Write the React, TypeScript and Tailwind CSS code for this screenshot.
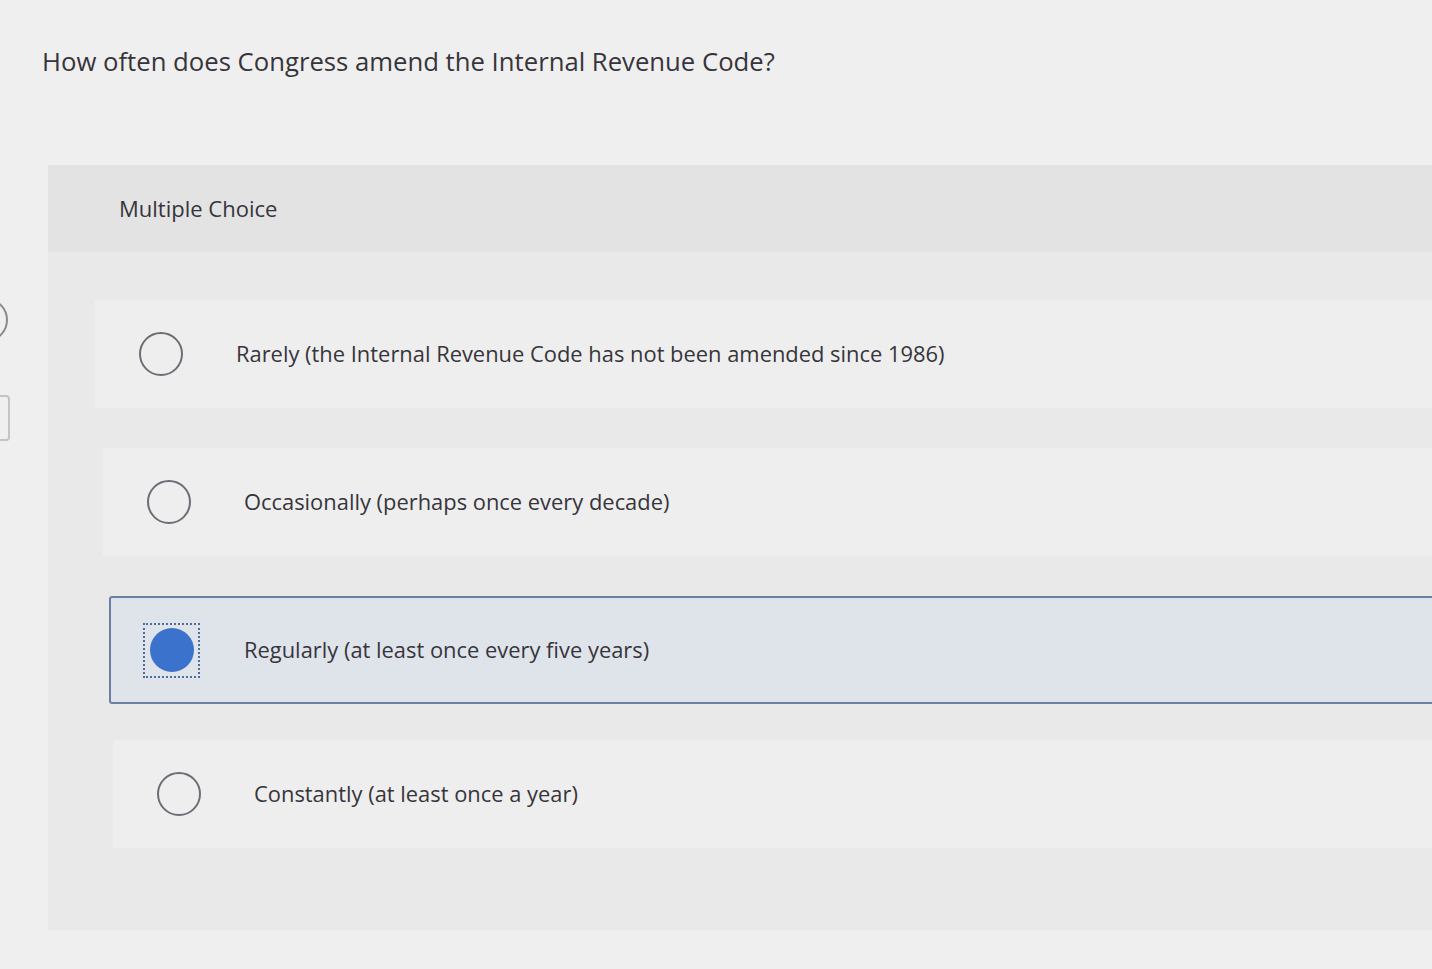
import React from 'react';

const options = [
  { id: 'a', label: 'Rarely (the Internal Revenue Code has not been amended since 1986)', indent: 'ml-[47px]' },
  { id: 'b', label: 'Occasionally (perhaps once every decade)', indent: 'ml-[55px]' },
  { id: 'c', label: 'Regularly (at least once every five years)', indent: 'ml-[61px]' },
  { id: 'd', label: 'Constantly (at least once a year)', indent: 'ml-[65px]' },
];

const selected = 'c';

const App: React.FC = () => {
  return (
    <div
      className="relative min-h-screen overflow-hidden bg-[#efefef] text-[#37353b]"
      style={{ fontFamily: '"Open Sans", Lato, sans-serif' }}
    >
      {/* bits of another element peeking in at the left edge */}
      <div className="absolute -left-[30px] top-[298px] h-[44px] w-[38px] rounded-r-full border-2 border-[#8a8a8a]" />
      <div className="absolute -left-[20px] top-[395px] h-[46px] w-[30px] rounded-r-sm border-2 border-[#c4c4c4]" />

      <div className="pl-[42px] pt-[44px]">
        <h1 className="text-[25.7px] leading-[36px] font-normal">
          How often does Congress amend the Internal Revenue Code?
        </h1>
      </div>

      <div className="ml-[48px] mt-[85px] bg-[#e9e9e9]">
        <div className="flex h-[87px] items-center bg-[#e3e3e3] pl-[71px]">
          <span className="text-[22px]">Multiple Choice</span>
        </div>

        <div className="flex flex-col gap-[40px] pb-[82px] pt-[48px]">
          {options.map((o) => {
            const isSel = o.id === selected;
            if (isSel) {
              return (
                <div
                  key={o.id}
                  className={`${o.indent} -mr-4 -mb-[4px] flex h-[108px] items-center rounded-[3px] border-2 border-[#6b7fa3] bg-[#dfe4eb] pl-[32px]`}
                >
                  <div className="flex h-[55px] w-[57px] items-center justify-center border-2 border-dotted border-[#4f6d9e]">
                    <div className="h-[44px] w-[44px] rounded-full bg-[#3b72cc]" />
                  </div>
                  <span className="ml-[44px] text-[21.9px]">{o.label}</span>
                </div>
              );
            }
            return (
              <div
                key={o.id}
                className={`${o.indent} flex h-[108px] items-center bg-[#eeeeee] pl-[44px]`}
              >
                <div className="h-[44px] w-[44px] rounded-full border-2 border-[#6e6d76]" />
                <span className="ml-[53px] text-[21.9px]">{o.label}</span>
              </div>
            );
          })}
        </div>
      </div>
    </div>
  );
};

export default App;
